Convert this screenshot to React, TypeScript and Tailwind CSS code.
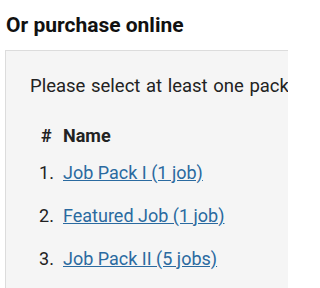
import React from "react";

const items = [
  "Job Pack I (1 job)",
  "Featured Job (1 job)",
  "Job Pack II (5 jobs)",
];

export default function App() {
  return (
    <div className="w-[288px] h-[288px] overflow-hidden bg-white font-['Roboto',sans-serif] text-[#222]">
      <h2 className="pl-[6px] pt-[13px] text-[21px] leading-[24px] font-bold text-[#111] whitespace-nowrap">
        Or purchase online
      </h2>
      <div className="ml-[5px] mt-[13px] w-[420px] h-[300px] border border-[#dcdcdc] bg-[#f5f5f5] pl-[24px] pt-[23px]">
        <p className="text-[18.5px] leading-[24px] whitespace-nowrap [word-spacing:1px]">
          Please select at least one package to continue.
        </p>
        <div className="mt-[26px] pl-[9px] text-[18px] leading-[24px]">
          <div className="flex font-bold">
            <span className="w-[24px] pl-[2px]">#</span>
            <span>Name</span>
          </div>
          <div className="mt-[13px] flex flex-col gap-[19px]">
            {items.map((t, i) => (
              <div key={t} className="flex whitespace-nowrap">
                <span className="w-[24px]">{i + 1}.</span>
                <a href="#" className="text-[#2a6aa0] underline">
                  {t}
                </a>
              </div>
            ))}
          </div>
        </div>
      </div>
    </div>
  );
}
